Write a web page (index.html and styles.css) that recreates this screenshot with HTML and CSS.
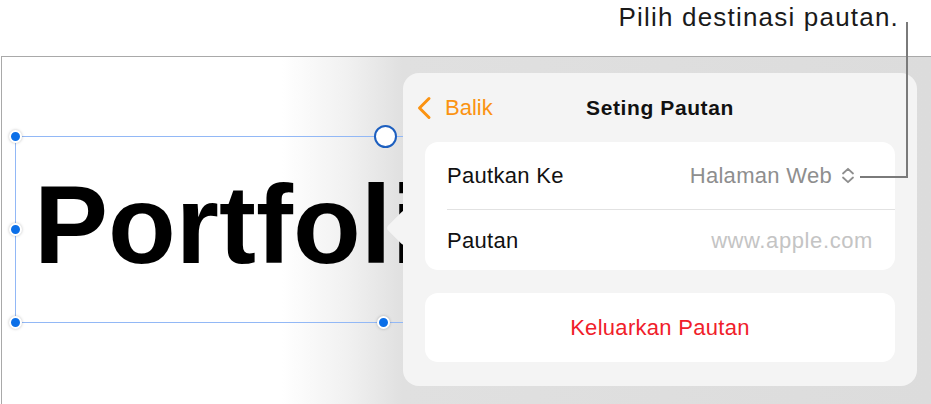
FILE: index.html
```html
<!DOCTYPE html>
<html lang="ms">
  <head>
    <meta charset="UTF-8" />
    <meta name="viewport" content="width=device-width, initial-scale=1.0" />
    <title>Seting Pautan</title>
    <link rel="stylesheet" href="styles.css">
  </head>
  <body>
    <!-- Callout above the screen -->
    <div class="callout">Pilih destinasi pautan.</div>
    <div class="leader"></div>

    <!-- Screen area -->
    <div class="screen">
      <!-- Selected text box on the canvas -->
      <div class="selection">
        <div class="big-text">Portfolio</div>
        <span class="handle tl"></span>
        <span class="handle ml"></span>
        <span class="handle bl"></span>
        <span class="handle bm"></span>
        <span class="ring"></span>
      </div>

      <!-- Link settings popover -->
      <div class="popover">
        <div class="pop-header">
          <button class="back-btn">
            <svg width="16" height="24" viewBox="0 0 16 24">
              <polyline points="13,2.5 3.5,12 13,21.5" fill="none" stroke="#fb9312" stroke-width="3" stroke-linecap="round" stroke-linejoin="round"/>
            </svg>
            <span>Balik</span>
          </button>
          <h2>Seting Pautan</h2>
          <span></span>
        </div>

        <div class="card">
          <div class="row row-first">
            <span class="label">Pautkan Ke</span>
            <span class="value">
              Halaman Web
              <svg width="14" height="17" viewBox="0 0 14 17">
                <polyline points="2,6.5 7,1.8 12,6.5" fill="none" stroke="#8e8e8e" stroke-width="1.8" stroke-linecap="round" stroke-linejoin="round"/>
                <polyline points="2,10.5 7,15.2 12,10.5" fill="none" stroke="#8e8e8e" stroke-width="1.8" stroke-linecap="round" stroke-linejoin="round"/>
              </svg>
            </span>
          </div>
          <div class="row row-second">
            <span class="label">Pautan</span>
            <span class="placeholder">www.apple.com</span>
          </div>
        </div>

        <div class="card remove">
          <span>Keluarkan Pautan</span>
        </div>
      </div>
    </div>
  </body>
</html>
```

FILE: styles.css
```css
/* Global Styles */
* {
  margin: 0;
  padding: 0;
  box-sizing: border-box;
}
body {
  font-family: "Liberation Sans", Arial, sans-serif;
  background: white;
  width: 931px;
  height: 404px;
  overflow: hidden;
  position: relative;
}

/* Callout */
.callout {
  height: 56px;
  padding: 2px 32px 0 0;
  text-align: right;
  font-size: 26px;
  line-height: 30px;
  letter-spacing: 1.2px;
  color: #1a1a1a;
}

.leader {
  position: absolute;
  left: 860px;
  top: 22px;
  width: 48px;
  height: 156px;
  border-right: 2px solid #7a7a7a;
  border-bottom: 2px solid #7a7a7a;
  z-index: 5;
}

/* Screen */
.screen {
  position: relative;
  height: 348px;
  margin-left: 1px;
  border-top: 1px solid #a9a9a9;
  border-left: 1px solid #a9a9a9;
  background: linear-gradient(to right, #fff 280px, #f1f1f1 345px, #e0e0e0 400px, #dcdcdc);
  overflow: hidden;
}

/* Selection box */
.selection {
  position: absolute;
  left: 13px;
  top: 79px;
  width: 738px;
  height: 187px;
  border: 1px solid #92b8f6;
  padding: 32px 0 0 18px;
}

/* the popover covers the rest of the word */
.big-text {
  width: 369px;
  overflow: hidden;
  font-size: 111px;
  line-height: 113px;
  font-weight: bold;
  color: black;
  white-space: nowrap;
}

.handle {
  position: absolute;
  width: 13px;
  height: 13px;
  border-radius: 50%;
  background: #0b6fe8;
  border: 2px solid white;
  box-shadow: 0 0 3px rgba(0, 0, 0, 0.25);
}
.handle.tl { left: -7px; top: -7px; }
.handle.ml { left: -7px; top: 86px; }
.handle.bl { left: -7px; bottom: -7px; }
.handle.bm { left: 361px; bottom: -7px; }

.ring {
  position: absolute;
  left: 358px;
  top: -12px;
  width: 23px;
  height: 23px;
  border-radius: 50%;
  border: 2px solid #1d5fbf;
  background: white;
}

/* Popover */
.popover {
  position: absolute;
  left: 401px;
  top: 16px;
  width: 514px;
  height: 313px;
  background: #f4f4f4;
  border-radius: 16px;
  z-index: 2;
}

.popover::before {
  content: "";
  position: absolute;
  left: -12px;
  top: 142px;
  width: 26px;
  height: 26px;
  background: #f4f4f4;
  border-radius: 4px;
  transform: rotate(45deg);
}

.pop-header {
  position: relative;
  height: 69px;
  padding: 0 13px;
  display: grid;
  grid-template-columns: 1fr auto 1fr;
  align-items: center;
}

.back-btn {
  display: flex;
  align-items: center;
  gap: 13px;
  background: none;
  border: none;
  font-family: inherit;
  font-size: 22px;
  color: #fb9312;
  justify-self: start;
}

.pop-header h2 {
  font-size: 21px;
  font-weight: bold;
  letter-spacing: 0.6px;
  color: #111;
}

/* Cards */
.card {
  position: relative;
  margin: 0 22px;
  background: white;
  border-radius: 13px;
  font-size: 22px;
  letter-spacing: 0.3px;
  color: #111;
}

.row {
  display: flex;
  justify-content: space-between;
  align-items: center;
  padding: 0 22px;
}

.row-first {
  height: 68px;
  padding-bottom: 1px;
}

.row-second {
  height: 60px;
  padding-top: 1px;
}

.row-first::after {
  content: "";
  position: absolute;
  left: 22px;
  right: 0;
  top: 67px;
  height: 1px;
  background: #e2e2e2;
}

.value {
  display: flex;
  align-items: center;
  gap: 9px;
  color: #8e8e8e;
  margin-right: 18px;
}

.placeholder {
  color: #c4c4c4;
  letter-spacing: 0.6px;
}

.card.remove {
  margin-top: 23px;
  height: 69px;
  display: flex;
  justify-content: center;
  align-items: center;
  color: #f0202a;
}
```
